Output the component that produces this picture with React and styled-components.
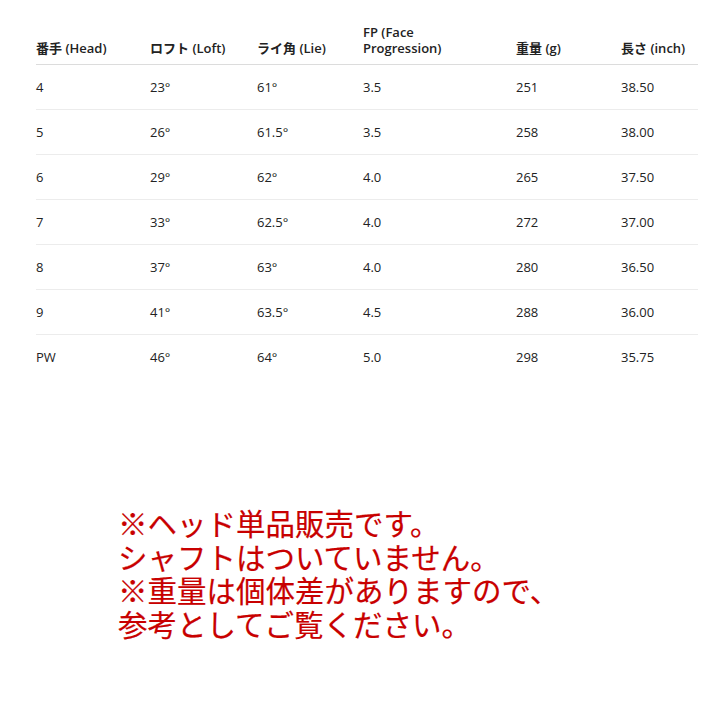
import React from 'react';
import styled, { createGlobalStyle } from 'styled-components';

const GlobalStyle = createGlobalStyle`
  html, body {
    margin: 0;
    padding: 0;
    background: #fff;
  }
  body {
    font-family: "Open Sans", "Noto Sans CJK JP", sans-serif;
    color: #222;
  }
`;

const Page = styled.div`
  width: 720px;
  height: 720px;
  padding: 16px 22px 0 36px;
  box-sizing: border-box;
`;

const Table = styled.table`
  width: 662px;
  border-collapse: collapse;
  table-layout: fixed;
  font-size: 13px;
`;

const Col = styled.col`
  width: ${(p) => p.$w}px;
`;

const Th = styled.th`
  text-align: left;
  vertical-align: bottom;
  font-weight: 600;
  line-height: 16px;
  padding: 8px 0;
  border-bottom: 1px solid #dcdcdc;
  white-space: nowrap;
`;

const Td = styled.td`
  height: 44px;
  padding: 0;
  line-height: 16px;
  border-bottom: ${(p) => (p.$last ? 'none' : '1px solid #ececec')};
`;

const Notice = styled.div`
  margin: 127px 0 0 82px;
  color: #c80000;
  font-family: "Noto Sans CJK JP", sans-serif;
  font-size: 29.5px;
  line-height: 33.5px;
  -webkit-text-stroke: 0.2px #c80000;
`;

const columns = [
  { label: '番手 (Head)', w: 114 },
  { label: 'ロフト (Loft)', w: 107 },
  { label: 'ライ角 (Lie)', w: 106 },
  { label: <>FP (Face<br />Progression)</>, w: 153 },
  { label: '重量 (g)', w: 105 },
  { label: '長さ (inch)', w: 77 },
];

const rows = [
  ['4', '23°', '61°', '3.5', '251', '38.50'],
  ['5', '26°', '61.5°', '3.5', '258', '38.00'],
  ['6', '29°', '62°', '4.0', '265', '37.50'],
  ['7', '33°', '62.5°', '4.0', '272', '37.00'],
  ['8', '37°', '63°', '4.0', '280', '36.50'],
  ['9', '41°', '63.5°', '4.5', '288', '36.00'],
  ['PW', '46°', '64°', '5.0', '298', '35.75'],
];

export default function App() {
  return (
    <>
      <GlobalStyle />
      <Page>
        <Table>
          <colgroup>
            {columns.map((c, i) => (
              <Col key={i} $w={c.w} />
            ))}
          </colgroup>
          <thead>
            <tr>
              {columns.map((c, i) => (
                <Th key={i}>{c.label}</Th>
              ))}
            </tr>
          </thead>
          <tbody>
            {rows.map((r, i) => (
              <tr key={i}>
                {r.map((v, j) => (
                  <Td key={j} $last={i === rows.length - 1}>{v}</Td>
                ))}
              </tr>
            ))}
          </tbody>
        </Table>
        <Notice>
          ※ヘッド単品販売です。<br />
          シャフトはついていません。<br />
          ※重量は個体差がありますので、<br />
          参考としてご覧ください。
        </Notice>
      </Page>
    </>
  );
}
